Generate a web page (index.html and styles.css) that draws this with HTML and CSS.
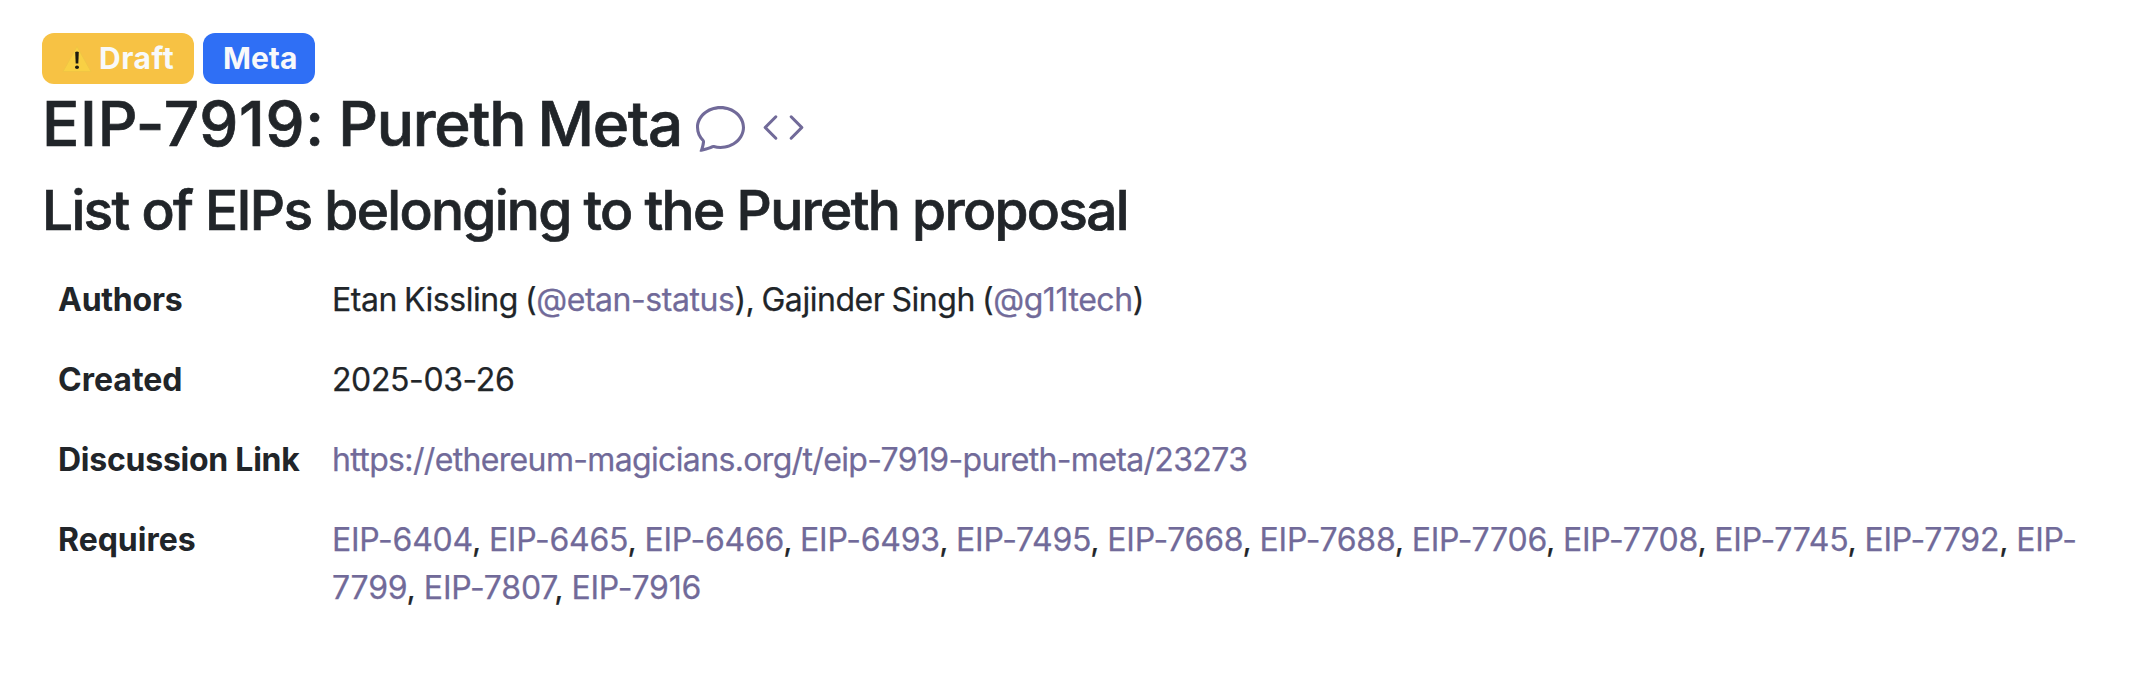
FILE: index.html
```html
<!DOCTYPE html>
<html lang="en">
<head>
<meta charset="utf-8">
<title>EIP-7919: Pureth Meta</title>
<link rel="stylesheet" href="styles.css">
</head>
<body>
<main class="page">
  <div class="badges">
    <span class="badge draft"><svg class="warn" viewBox="0 0 30 28"><path d="M15 1.5 29 26.5H1Z" fill="#f9d044" stroke="#f1c544" stroke-width="1" stroke-linejoin="round"/><path d="M13.2 7q1.8-1 3.6 0l-.5 11.5h-2.6z" fill="#1c1a10"/><ellipse cx="15" cy="22.2" rx="2" ry="1.7" fill="#1c1a10"/></svg><span class="draft-text">Draft</span></span>
    <span class="badge meta"><span class="meta-text">Meta</span></span>
  </div>
  <h1 class="title"><span class="title-text"><span class="number">EIP-7919:</span> <span class="name">Pureth Meta</span></span>
    <svg class="icon chat" viewBox="0 0 16 16"><path d="M2.678 11.894a1 1 0 0 1 .287.801 11 11 0 0 1-.398 2c1.395-.323 2.247-.697 2.634-.893a1 1 0 0 1 .71-.074A8 8 0 0 0 8 14c3.996 0 7-2.807 7-6s-3.004-6-7-6-7 2.808-7 6c0 1.468.617 2.83 1.678 3.894m-.493 3.905a22 22 0 0 1-.713.129c-.2.032-.352-.176-.273-.362a10 10 0 0 0 .244-.637l.003-.01c.248-.72.45-1.548.524-2.319C.743 11.37 0 9.76 0 8c0-3.866 3.582-7 8-7s8 3.134 8 7-3.582 7-8 7a9 9 0 0 1-2.347-.306c-.52.263-1.639.742-3.468 1.105"/></svg>
    <svg class="icon code" viewBox="0 0 16 16"><path d="M5.854 4.854a.5.5 0 1 0-.708-.708l-3.5 3.5a.5.5 0 0 0 0 .708l3.5 3.5a.5.5 0 0 0 .708-.708L2.707 8zm4.292 0a.5.5 0 0 1 .708-.708l3.5 3.5a.5.5 0 0 1 0 .708l-3.5 3.5a.5.5 0 0 1-.708-.708L13.293 8z"/></svg>
  </h1>
  <h2 class="subtitle">List of EIPs belonging to the Pureth proposal</h2>
  <dl class="preamble">
    <dt class="tight">Authors</dt><dd><span class="authors">Etan Kissling (<a>@etan-status</a>), Gajinder Singh (<a>@g11tech</a>)</span></dd>
    <dt>Created</dt><dd><span class="created">2025-03-26</span></dd>
    <dt class="tight">Discussion Link</dt><dd><a class="url">https://ethereum-magicians.org/t/eip-7919-pureth-meta/23273</a></dd>
    <dt>Requires</dt><dd><span class="req"><a>EIP-6404</a>, <a>EIP-6465</a>, <a>EIP-6466</a>, <a>EIP-6493</a>, <a>EIP-7495</a>, <a>EIP-7668</a>, <a>EIP-7688</a>, <a>EIP-7706</a>, <a>EIP-7708</a>, <a>EIP-7745</a>, <a>EIP-7792</a>, <a>EIP-</a></span><br><span class="req-last"><a>7799</a>, <a>EIP-7807</a>, <a>EIP-7916</a></span></dd>
  </dl>
</main>
</body>
</html>
```
FILE: styles.css
```css
* { box-sizing: border-box; }
body { margin: 0; background: #fff; color: #212529; font: 400 32px/48px Inter, sans-serif; font-feature-settings: "calt" 0; }
.page { padding: 33px 42px 0; }
.badges { display: flex; gap: 9px; height: 51px; }
.badge { display: flex; align-items: center; height: 51px; border-radius: 12px; color: #f8f9fa; font-weight: 700; font-size: 30px; line-height: 51px; white-space: nowrap; }
.draft { width: 152px; padding-left: 20px; background: #f7c244; }
.draft-text { letter-spacing: .5px; }
.warn { width: 30px; height: 28px; margin: 0 7px 0 0; flex: none; }
.meta { width: 112px; padding-left: 20px; background: #2f6ff5; }
.title { display: flex; margin: 0; height: 80px; font-weight: 500; font-size: 62px; line-height: 80px; white-space: nowrap; -webkit-text-stroke: .7px #212529; }
.title-text { width: 654px; word-spacing: -3px; }
.number { letter-spacing: .7px; }
.name { letter-spacing: -1.3px; }
.icon { fill: #716a99; flex: none; -webkit-text-stroke: 0; }
.chat { width: 49px; height: 49px; margin-top: 19px; }
.code { width: 49px; height: 49px; margin: 19px 0 0 14px; }
.subtitle { margin: 5px 0 0; height: 82px; font-weight: 500; font-size: 55px; line-height: 82px; letter-spacing: -1.7px; white-space: nowrap; -webkit-text-stroke: .7px #212529; }
.preamble { display: grid; grid-template-columns: 290px 1fr; row-gap: 32px; margin: 25px 0 0; }
dt { padding-left: 16px; font-weight: 700; white-space: nowrap; }
dd { margin: 0; white-space: nowrap; -webkit-text-stroke: .25px currentColor; }
a { color: #716a99; }
.tight { letter-spacing: -.25px; }
.authors { letter-spacing: -.45px; word-spacing: -1.5px; }
.created { letter-spacing: -.4px; }
.url { letter-spacing: -.65px; }
.req { letter-spacing: -.24px; word-spacing: -.8px; }
.req-last { letter-spacing: -.2px; word-spacing: -.6px; }
```
